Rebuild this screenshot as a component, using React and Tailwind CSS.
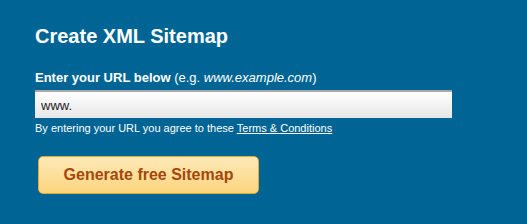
export default function App() {
  return (
    <div className="h-[224px] w-[527px] bg-[#006594] pl-[35px] pt-[24px] font-['Liberation_Sans',Arial,sans-serif] text-white">
      <h1 className="text-[20px] font-bold leading-[24px]">Create XML Sitemap</h1>

      <label className="mt-[22px] block text-[13px] leading-[16px]">
        <span className="font-bold">Enter your URL below</span> (e.g. <i>www.example.com</i>)
      </label>

      <input
        type="text"
        defaultValue="www."
        className="mt-[4px] block h-[28px] w-[417px] border-t-2 border-[#a9a9a9] bg-gradient-to-b from-white to-[#e6e6e6] px-[6px] text-[13px] text-[#222] outline-none"
      />

      <p className="mt-[4px] text-[11px] leading-[13px]">
        By entering your URL you agree to these{" "}
        <a href="#" className="underline">Terms & Conditions</a>
      </p>

      <button
        type="button"
        className="ml-[3px] mt-[21px] h-[38px] w-[221px] rounded-[5px] border border-[#e8a834] bg-gradient-to-b from-[#fde9b8] to-[#fcd57c] text-[16px] font-bold text-[#a5470c]"
      >
        Generate free Sitemap
      </button>
    </div>
  );
}
